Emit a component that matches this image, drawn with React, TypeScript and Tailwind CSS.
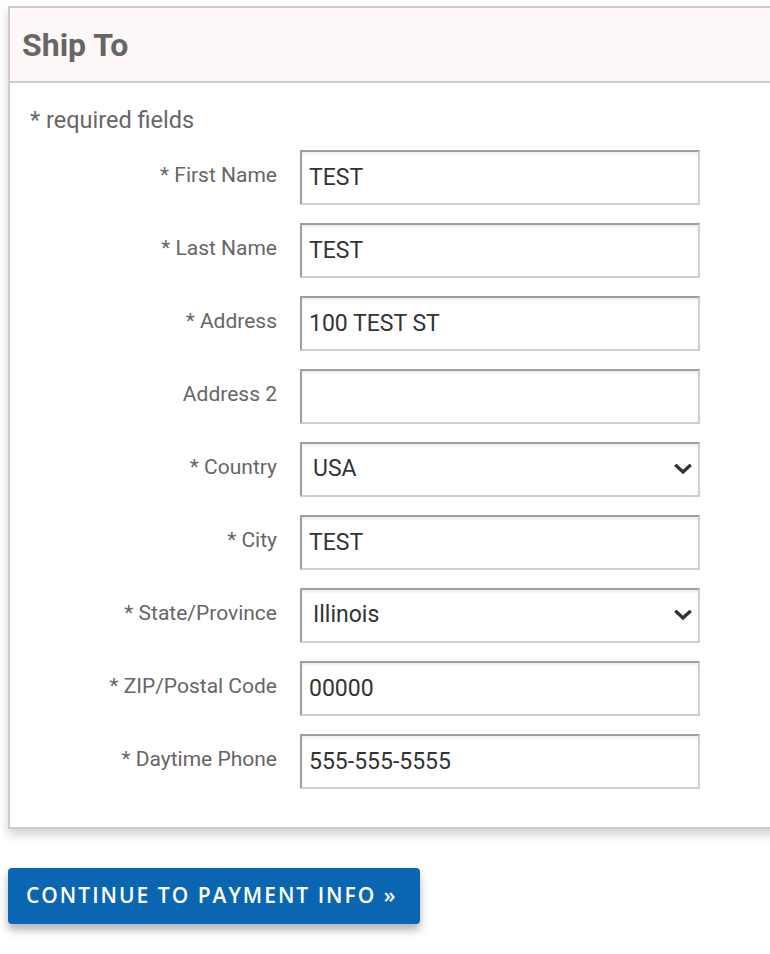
import { useState } from "react";

interface Field {
  label: string;
  value: string;
  kind?: "select";
  options?: string[];
}

const fields: Field[] = [
  { label: "* First Name", value: "TEST" },
  { label: "* Last Name", value: "TEST" },
  { label: "* Address", value: "100 TEST ST" },
  { label: "Address 2", value: "" },
  { label: "* Country", value: "USA", kind: "select", options: ["USA", "Canada"] },
  { label: "* City", value: "TEST" },
  { label: "* State/Province", value: "Illinois", kind: "select", options: ["Illinois", "Indiana", "Iowa"] },
  { label: "* ZIP/Postal Code", value: "00000" },
  { label: "* Daytime Phone", value: "555-555-5555" },
];

const boxClass =
  "w-[400px] h-[55px] border-2 border-t-[#9e9e9e] border-l-[#9e9e9e] border-r-[#cfcfcf] border-b-[#cfcfcf] bg-white shadow-[inset_0_2px_3px_rgba(0,0,0,0.08)] text-[23px] text-[#333] outline-none";

function Chevron() {
  return (
    <svg width="18" height="11" viewBox="0 0 18 11" className="absolute right-[8px] top-[22px] pointer-events-none">
      <path d="M2.5 2 L9 8 L15.5 2" fill="none" stroke="#333" strokeWidth="3.4" strokeLinecap="square" />
    </svg>
  );
}

function FormRow({ field }: { field: Field }) {
  const [value, setValue] = useState(field.value);

  return (
    <div className="flex items-start">
      <label className="w-[267px] pt-[12px] text-right text-[21px] leading-[26px] text-[#666]">{field.label}</label>
      <div className="ml-[23px] relative">
        {field.kind === "select" ? (
          <>
            <select
              value={value}
              onChange={(e) => setValue(e.target.value)}
              className={`${boxClass} appearance-none pl-[11px] pr-[36px] rounded-none`}
            >
              {field.options?.map((opt) => (
                <option key={opt}>{opt}</option>
              ))}
            </select>
            <Chevron />
          </>
        ) : (
          <input value={value} onChange={(e) => setValue(e.target.value)} className={`${boxClass} px-[7px]`} />
        )}
      </div>
    </div>
  );
}

export default function App() {
  return (
    <div className="min-h-[954px] w-[770px] overflow-hidden bg-white pt-[6px] font-['Roboto',sans-serif]">
      <div className="ml-[8px] w-[820px] border-2 border-[#cccccc] bg-white shadow-[0_6px_10px_rgba(0,0,0,0.18)]">
        <div className="h-[75px] flex items-center px-[12px] bg-[#fdf8f7] border-b-2 border-[#cccccc]">
          <h2 className="text-[32px] font-bold text-[#666] leading-none">Ship To</h2>
        </div>
        <div className="pt-[24px] pb-[38px] pl-[20px]">
          <p className="text-[23.5px] leading-[26px] text-[#666]">* required fields</p>
          <div className="mt-[17px] ml-[-20px] flex flex-col gap-[18px]">
            {fields.map((field) => (
              <FormRow key={field.label} field={field} />
            ))}
          </div>
        </div>
      </div>

      <button className="mt-[39px] ml-[8px] w-[412px] h-[56px] rounded-[4px] bg-[#0b66b1] shadow-[0_6px_8px_rgba(0,0,0,0.3)] text-left pl-[18px] text-white text-[21px] font-semibold tracking-[2px] font-['Open_Sans',sans-serif]">
        CONTINUE TO PAYMENT INFO »
      </button>
    </div>
  );
}
